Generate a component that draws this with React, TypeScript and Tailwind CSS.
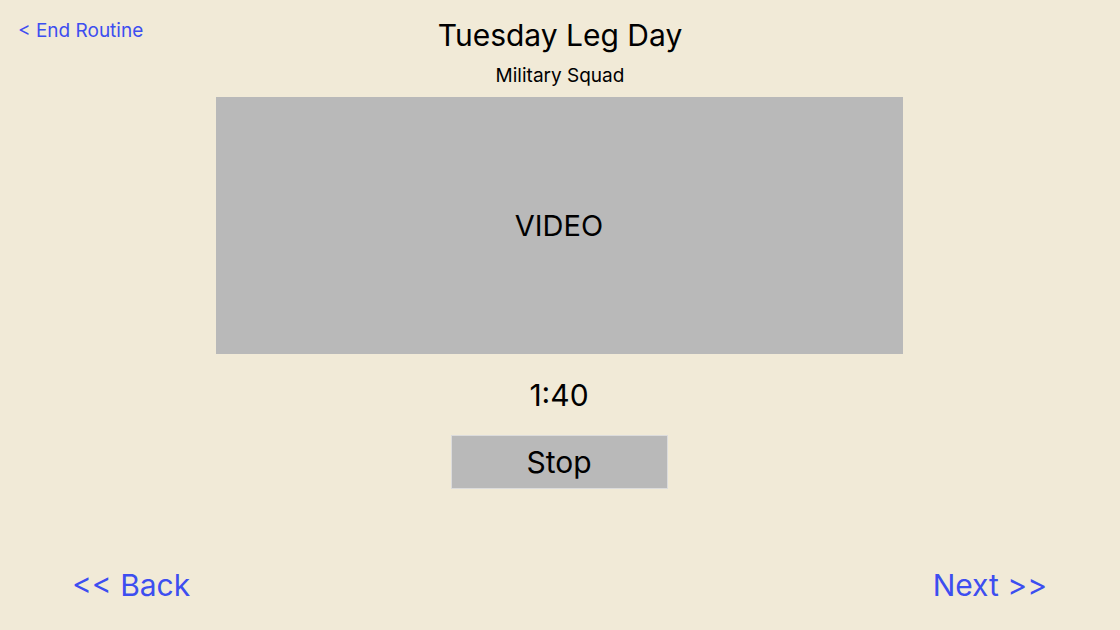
import React from "react";

const App: React.FC = () => {
  return (
    <div
      className="w-[1120px] h-[630px] bg-[#f1ead7] text-black flex flex-col"
      style={{ fontFamily: "Inter, 'Noto Sans', sans-serif" }}
    >
      <div className="grid grid-cols-[1fr_auto_1fr] items-start">
        <a className="pl-[18px] pt-[21px] text-[19px] text-[#3d4ef0] leading-none cursor-pointer">
          &lt; End Routine
        </a>
        <div className="flex flex-col items-center pt-[17px]">
          <h1 className="text-[30px] leading-[36px]">Tuesday Leg Day</h1>
          <p className="text-[19px] leading-[24px] mt-[11px]">Military Squad</p>
        </div>
        <div />
      </div>

      <div className="flex flex-col items-center pr-[2px]">
        <div className="mt-[9px] w-[687px] h-[257px] bg-[#b9b9b9] flex items-center justify-center text-[29px]">
          VIDEO
        </div>
        <div className="mt-[23px] text-[30px] leading-[36px]">1:40</div>
        <button className="mt-[22px] w-[217px] h-[54px] bg-[#b9b9b9] text-[30px] border border-[#dcdcdc]">
          Stop
        </button>
      </div>

      <div className="mt-auto mb-[25px] flex justify-between pl-[72px] pr-[73px] text-[30px] text-[#3d4ef0] leading-[40px]">
        <a className="cursor-pointer">&lt;&lt; Back</a>
        <a className="cursor-pointer">Next &gt;&gt;</a>
      </div>
    </div>
  );
};

export default App;
